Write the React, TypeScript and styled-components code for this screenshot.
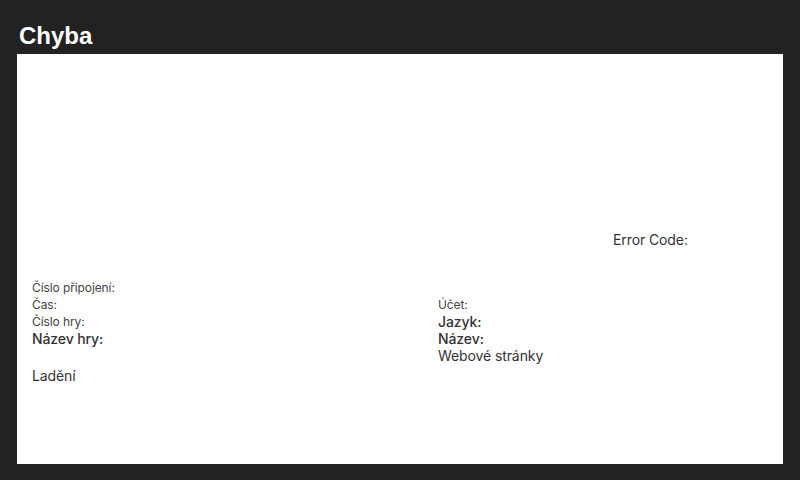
import React from "react";
import styled, { createGlobalStyle } from "styled-components";

const GlobalStyle = createGlobalStyle`
  html, body {
    margin: 0;
    padding: 0;
    background: #222222;
    font-family: Inter, Roboto, "Liberation Sans", sans-serif;
  }
`;

const Screen = styled.div`
  width: 800px;
  height: 480px;
  box-sizing: border-box;
  background: #222222;
  padding: 0 17px 16px 17px;
  display: flex;
  flex-direction: column;
`;

const Title = styled.h1`
  margin: 0;
  height: 54px;
  box-sizing: border-box;
  padding: 21px 0 0 2px;
  color: #ffffff;
  font-family: "Liberation Sans", Arial, sans-serif;
  font-weight: 700;
  font-size: 24px;
  line-height: 29px;
`;

const Panel = styled.div`
  flex: 1;
  background: #ffffff;
  box-sizing: border-box;
  padding: 177px 15px 0 15px;
  display: flex;
  flex-direction: column;
  letter-spacing: -0.1px;
`;

const CodeRow = styled.div`
  display: flex;
  justify-content: flex-end;
`;

const CodeBox = styled.div`
  width: 155px;
  font-size: 14px;
  line-height: 17px;
  color: #333333;
`;

const Details = styled.div`
  margin-top: 31px;
  display: grid;
  grid-template-columns: 406px 1fr;
`;

const Column = styled.div<{ offset?: number }>`
  display: flex;
  flex-direction: column;
  padding-top: ${(p) => p.offset ?? 0}px;
`;

const Line = styled.div<{ size?: "small" | "big"; strong?: boolean; gap?: number }>`
  height: 17px;
  line-height: 17px;
  font-size: ${(p) => (p.size === "small" ? "12px" : "14px")};
  font-weight: ${(p) => (p.strong ? 500 : 400)};
  color: ${(p) => (p.size === "small" ? "#444444" : "#333333")};
  margin-top: ${(p) => p.gap ?? 0}px;
  white-space: nowrap;
`;

export default function App() {
  return (
    <>
      <GlobalStyle />
      <Screen>
        <Title>Chyba</Title>
        <Panel>
          <CodeRow>
            <CodeBox>Error Code:</CodeBox>
          </CodeRow>
          <Details>
            <Column>
              <Line size="small">Číslo připojení:</Line>
              <Line size="small">Čas:</Line>
              <Line size="small">Číslo hry:</Line>
              <Line size="big" strong>
                Název hry:
              </Line>
              <Line size="big" gap={20}>
                Ladění
              </Line>
            </Column>
            <Column offset={17}>
              <Line size="small">Účet:</Line>
              <Line size="big" strong>
                Jazyk:
              </Line>
              <Line size="big" strong>
                Název:
              </Line>
              <Line size="big">Webové stránky</Line>
            </Column>
          </Details>
        </Panel>
      </Screen>
    </>
  );
}
